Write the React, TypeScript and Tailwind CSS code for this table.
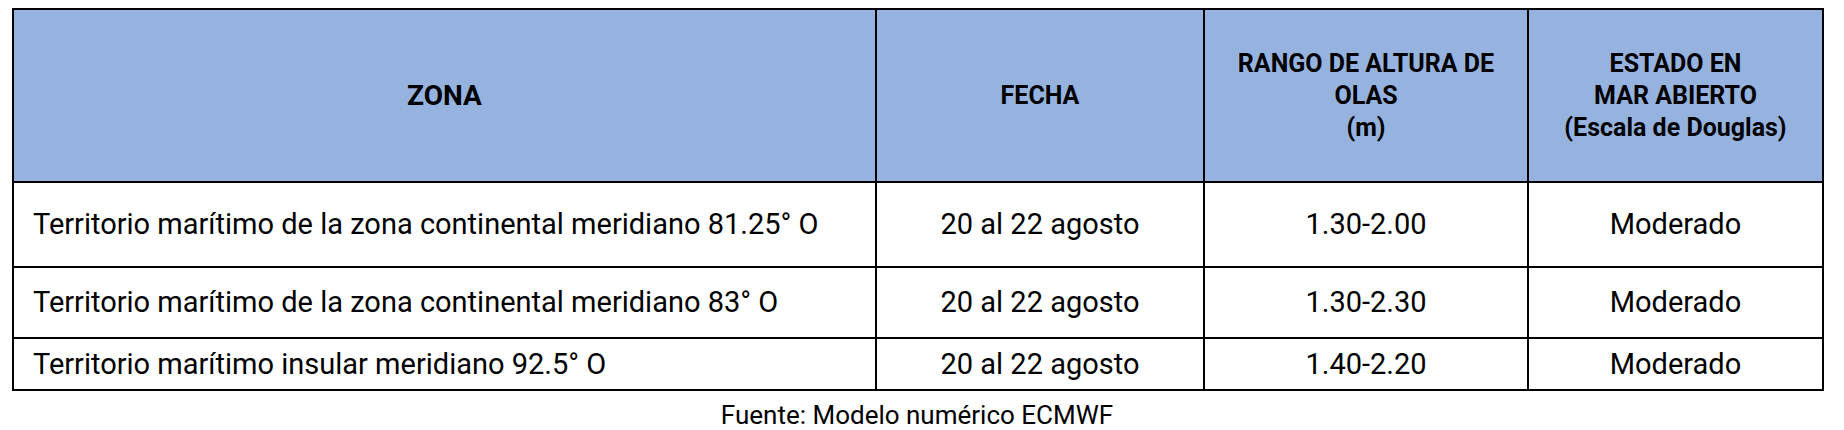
const rows = [
  { zona: 'Territorio marítimo de la zona continental meridiano 81.25° O', h: 'h-[85px]', rango: '1.30-2.00' },
  { zona: 'Territorio marítimo de la zona continental meridiano 83° O', h: 'h-[71px]', rango: '1.30-2.30' },
  { zona: 'Territorio marítimo insular meridiano 92.5° O', h: 'h-[52px]', rango: '1.40-2.20' },
];

export default function App() {
  return (
    <div className="w-[1844px] h-[430px] bg-white pt-2 pl-3 font-['Roboto',sans-serif] text-black">
      <table className="w-[1810px] border-collapse border-2 border-black table-fixed">
        <colgroup>
          <col className="w-[863px]" />
          <col className="w-[328px]" />
          <col className="w-[324px]" />
          <col className="w-[295px]" />
        </colgroup>
        <thead>
          <tr className="h-[173px] bg-[#95b3de] text-[25px] font-bold leading-[32px]">
            <th className="border-2 border-black text-[28px]">ZONA</th>
            <th className="border-2 border-black">FECHA</th>
            <th className="border-2 border-black">
              RANGO DE ALTURA DE
              <br />
              OLAS
              <br />
              (m)
            </th>
            <th className="border-2 border-black">
              ESTADO EN
              <br />
              MAR ABIERTO
              <br />
              (Escala de Douglas)
            </th>
          </tr>
        </thead>
        <tbody className="text-[29px] leading-none">
          {rows.map((r) => (
            <tr key={r.rango} className={r.h}>
              <td className="border-2 border-black pl-[19px] text-left">{r.zona}</td>
              <td className="border-2 border-black text-center">20 al 22 agosto</td>
              <td className="border-2 border-black text-center">{r.rango}</td>
              <td className="border-2 border-black text-center">Moderado</td>
            </tr>
          ))}
        </tbody>
      </table>
      <p className="w-[1810px] text-center text-[26px] leading-none mt-[11px]">Fuente: Modelo numérico ECMWF</p>
    </div>
  );
}
